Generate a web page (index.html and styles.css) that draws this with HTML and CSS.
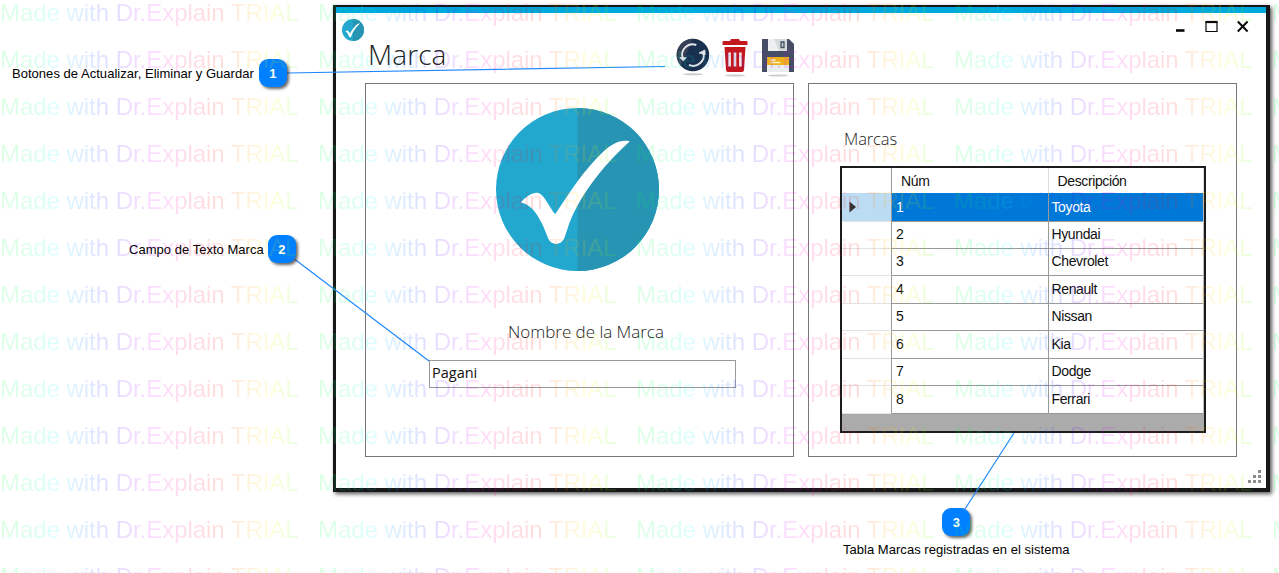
FILE: index.html
```html
<!DOCTYPE html>
<html lang="es">
<head>
<meta charset="utf-8">
<title>Marca</title>
<link rel="stylesheet" href="styles.css">
</head>
<body>
<main class="page">
  <section class="window">
    <header class="titlebar">
      <svg class="app-icon" viewBox="0 0 162 162"><use href="#check-badge"/></svg>
      <h1 class="title"><span>Marca</span></h1>
      <div class="toolbar">
        <svg class="tool" width="36" height="40" viewBox="0 0 36 40">
          <ellipse cx="18" cy="36.3" rx="10" ry="1" fill="#ccc"/>
          <circle cx="18" cy="17" r="16.2" fill="#19304f"/>
          <path d="M18 .8a16.2 16.2 0 0 0-12 27.400z" fill="#363f55"/>
          <path d="M7.800 20.500a10.500 10.500 0 0 1 13.500-13.500M28.200 14A10.500 10.500 0 0 1 14 26.900" fill="none" stroke="#e4e7ea" stroke-width="1.900"/>
          <path d="M4.800 19.500l6.500.3-3 3zM24 15l5.800-3 .4 4.500z" fill="#e4e7ea" stroke="#e4e7ea" stroke-width=".8"/>
        </svg>
        <svg class="tool" width="26" height="40" viewBox="0 0 26 40">
          <ellipse cx="13" cy="37.500" rx="10" ry="1" fill="#ccc"/>
          <path d="M9 1h8l1 2h6.500q1 0 1 1v3H.5V4q0-1 1-1H8zM2.500 9h21l-1.500 23q-.2 2-2 2h-14q-1.800 0-2-2z" fill="#c4181f"/>
          <path d="M7.600 14.500v14M13 14.500v14M18.400 14.500v14" stroke="#f6e8ea" stroke-width="2.600"/>
        </svg>
        <svg class="tool" width="34" height="40" viewBox="0 0 34 40">
          <ellipse cx="17" cy="37.500" rx="10" ry="1" fill="#ccc"/>
          <path d="M1 1h27l5 5v28H1z" fill="#454e64"/>
          <path d="M7 1h19v12H7z" fill="#d5dadb"/><path d="M7 1h6l5 12H7z" fill="#edf0f0"/>
          <path d="M20 4h3v5.500h-3z" fill="#c5cacf" stroke="#454e64" stroke-width="1.300"/>
          <path d="M6 19h22v15H6z" fill="#e9eded"/><path d="M6 19h22v8H6z" fill="#efb01d"/>
          <path d="M9.500 22h5M9.500 24.500h10" stroke="#fff2c7" stroke-width="1.300"/>
        </svg>
      </div>
      <svg class="controls" width="76" height="16" viewBox="0 0 76 16" fill="none" stroke="#080808">
        <path d="M1 12.500h8.500" stroke-width="2.600"/>
        <path d="M31 4h11v9.500H31z" stroke-width="1.200"/><path d="M30.500 4h12" stroke-width="2.200"/>
        <path d="M62.800 3.500l9.800 10M72.600 3.500l-9.800 10" stroke-width="2"/>
      </svg>
    </header>
    <div class="panels">
      <section class="panel form-panel">
        <svg class="brand" viewBox="0 0 162 162">
          <g id="check-badge">
            <circle cx="81" cy="81" r="81" fill="#22a7cf"/>
            <path d="M81 0a81 81 0 0 1 0 162z" fill="#2894b3"/>
            <path d="M24.500 94C31 87 37 83.500 42 84.500C48 86 53 99 58.800 105.500C74 83 87 62 107 43C117 34 125 31.500 133 33C112 52 91 77 80 99C72 114 71 122 68 129C65 137 55 137 52 130C46 114 38 96 24.500 94z" fill="#fff"/>
          </g>
        </svg>
        <label class="field-label"><span>Nombre de la Marca</span></label>
        <div class="field"><span>Pagani</span></div>
      </section>
      <section class="panel list-panel">
        <h2 class="list-title"><span>Marcas</span></h2>
        <div class="grid">
          <div class="row head"><i></i><b>Núm</b><b>Descripción</b></div>
          <div class="row selected"><i><svg width="8" height="12" viewBox="0 0 8 12"><path d="M.5.5v11L7 6z" fill="#333"/></svg></i><b>1</b><b>Toyota</b></div>
          <div class="row"><i></i><b>2</b><b>Hyundai</b></div>
          <div class="row"><i></i><b>3</b><b>Chevrolet</b></div>
          <div class="row"><i></i><b>4</b><b>Renault</b></div>
          <div class="row"><i></i><b>5</b><b>Nissan</b></div>
          <div class="row"><i></i><b>6</b><b>Kia</b></div>
          <div class="row"><i></i><b>7</b><b>Dodge</b></div>
          <div class="row"><i></i><b>8</b><b>Ferrari</b></div>
        </div>
      </section>
    </div>
    <svg class="grip" width="13" height="13" viewBox="0 0 13 13" fill="#8c8c8c"><path d="M10 0h3v3h-3zM5 5h3v3H5zM10 5h3v3h-3zM0 10h3v3H0zM5 10h3v3H5zM10 10h3v3h-3z"/></svg>
  </section>

  <svg class="leaders" width="1279" height="573" fill="none" stroke="#2389fb" stroke-width="1.200">
    <path d="M287 73L665 66.500M295 259.500L429 361M965 509L1014 433"/>
  </svg>
  <div class="callout c1"><span>Botones de Actualizar, Eliminar y Guardar</span><em>1</em></div>
  <div class="callout c2"><span>Campo de Texto Marca</span><em>2</em></div>
  <div class="callout c3"><em>3</em><span>Tabla Marcas registradas en el sistema</span></div>
  <div class="watermark" id="watermark"></div>
</main>
<script src="script.js"></script>
</body>
</html>
```
FILE: styles.css
```css
* { box-sizing: border-box; }
body { margin: 0; background: #fff; font-family: "Liberation Sans", Arial, sans-serif; color: #111; }
.page { position: relative; width: 1279px; height: 573px; overflow: hidden; padding: 5px 0 0 333px; }
.window {
  position: relative; width: 937px; height: 487px; background: #fff;
  border: solid #17171a; border-width: 2px 4px 4px 3px;
  box-shadow: 2px 2px 4px rgba(0,0,0,.65);
}
.titlebar { display: flex; align-items: flex-start; height: 76px; border-top: 6px solid #00aadc; }
.app-icon { width: 22px; height: 22px; margin: 6px 0 0 6px; }
.title {
  margin: 21px 0 0 4px; width: 307px; height: 40px;
  font: 300 28px/40px "Open Sans", sans-serif; color: #222; letter-spacing: .1px;
}
.toolbar { display: flex; width: 500px; padding-top: 25px; }
.tool:nth-child(2) { margin-left: 11px; }
.tool:nth-child(3) { margin-left: 13px; }
.controls { margin: 5px 0 0 0; flex: none; }
.panels { display: flex; gap: 15px; padding-left: 29px; }
.panel { flex: none; height: 374px; border: 1px solid #777; width: 429px; }
.form-panel { display: flex; flex-direction: column; align-items: flex-start; }
.brand { width: 163px; height: 163px; margin: 24px 0 0 130px; }
.field-label { margin: 49px 0 0 142px; font: 300 17px/24px "Open Sans", sans-serif; color: #222; letter-spacing: -.02px; }
.field {
  width: 307px; height: 28px; margin: 16px 0 0 63px; padding-left: 2px;
  border: 1px solid #999; font: 14.500px/24px "Open Sans", sans-serif;
}
.list-panel { width: 429px; margin-left: -1px; padding: 42px 0 0 31px; }
.list-title { margin: 0 0 0 4px; font: 300 16.500px/25px "Open Sans", sans-serif; color: #222; height: 40px; letter-spacing: -.1px; }
.grid { width: 366px; height: 267px; border: 2px solid #1c1c1c; background: #ababab; }
.row { display: grid; grid-template-columns: 50px 156.500px 1fr; height: 27.500px; font-size: 14px; line-height: 27px; background: #fff; letter-spacing: -.38px; }
.row i { border-right: 1px solid #999; border-bottom: 1px solid #e2e2e2; }
.row b { font-weight: 400; padding-left: 4px; border-right: 1px solid #999; border-bottom: 1px solid #999; }
.row b:last-child { padding-left: 3px; border-right-color: #bbb; }
.row.head { height: 25px; }
.row.head b { padding-left: 9px; line-height: 26px; border-right-color: #ddd; }
.row.head i { border-bottom-color: #999; }
.row.selected b { background: #0078d7; color: #fff; line-height: 28px; }
.row.selected i { background: #bcdcf4; padding: 8px 0 0 7px; }
.row.selected svg { display: block; }
.grip { position: absolute; right: 5px; bottom: 5px; }
.leaders { position: absolute; left: 0; top: 0; }
.callout { position: absolute; display: flex; align-items: center; gap: 5px; font-size: 13px; line-height: 16px; white-space: nowrap; color: #000; letter-spacing: .03px; }
.callout span { padding-top: 2px; }
.callout em {
  width: 28px; height: 28px; border-radius: 9px; background: #0080ff; color: #fff;
  font: bold 13px/29px "Liberation Sans", sans-serif; text-align: center;
  box-shadow: 2px 2px 3px rgba(0,0,0,.6);
}
.c1 { left: 12px; top: 59px; }
.c2 { left: 129px; top: 235px; gap: 4px; }
.c3 { left: 843px; top: 508px; flex-direction: column; gap: 4px; }
.watermark {
  position: absolute; left: 0; top: 0; display: grid; pointer-events: none;
  grid-template-columns: repeat(5, 318px); grid-auto-rows: 47px; opacity: .13;
}
.watermark span {
  justify-self: start; height: 30px; font-size: 24px; line-height: 26px; letter-spacing: -.04px; white-space: nowrap;
  color: transparent; -webkit-background-clip: text; background-clip: text;
  background-image: linear-gradient(90deg, #00ff40 0%, #00ff70 9%, #00ffff 18%, #0080ff 27%, #1a10ff 37%, #8000ff 43%, #ff00ff 54%, #ff0040 64%, #ff1000 74%, #ff8000 80%, #ffff00 91%, #50ff00 99%);
}
```
FILE: script.js
```js
// Tile the trial notice over the whole page: 5 columns by 13 rows.
const layer = document.getElementById('watermark');
for (let i = 0; i < 65; i++) {
  const mark = document.createElement('span');
  mark.textContent = 'Made with Dr.Explain TRIAL';
  layer.appendChild(mark);
}
```
